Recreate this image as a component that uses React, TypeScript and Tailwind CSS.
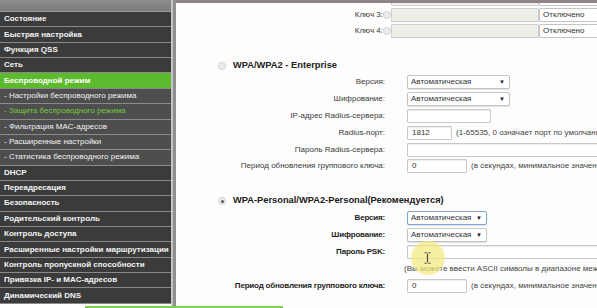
import React from 'react';

const menu: { label: string; kind: 'main' | 'sub' | 'active' | 'subActive' }[] = [
  { label: 'Состояние', kind: 'main' },
  { label: 'Быстрая настройка', kind: 'main' },
  { label: 'Функция QSS', kind: 'main' },
  { label: 'Сеть', kind: 'main' },
  { label: 'Беспроводной режим', kind: 'active' },
  { label: '- Настройки беспроводного режима', kind: 'sub' },
  { label: '- Защита беспроводного режима', kind: 'subActive' },
  { label: '- Фильтрация MAC-адресов', kind: 'sub' },
  { label: '- Расширенные настройки', kind: 'sub' },
  { label: '- Статистика беспроводного режима', kind: 'sub' },
  { label: 'DHCP', kind: 'main' },
  { label: 'Переадресация', kind: 'main' },
  { label: 'Безопасность', kind: 'main' },
  { label: 'Родительский контроль', kind: 'main' },
  { label: 'Контроль доступа', kind: 'main' },
  { label: 'Расширенные настройки маршрутизации', kind: 'main' },
  { label: 'Контроль пропускной способности', kind: 'main' },
  { label: 'Привязка IP- и MAC-адресов', kind: 'main' },
  { label: 'Динамический DNS', kind: 'main' },
];

function Sidebar() {
  return (
    <div className="flex shrink-0">
      <div className="w-[171px] flex flex-col">
        <div className="h-[12px] bg-gradient-to-b from-[#8e8e8e] to-[#7a7a7a] border-b border-[#999]" />
        {menu.map((m) => (
          <div
            key={m.label}
            className={
              'h-[15.37px] flex items-center pl-[4px] border-b-[1.5px] border-[#8a8a8a] text-[8px] font-bold whitespace-nowrap overflow-hidden ' +
              (m.kind === 'active'
                ? 'bg-[#5cbb2c] text-white'
                : m.kind === 'sub'
                  ? 'bg-[#4e4e4e] text-[#f2f2f2] font-normal'
                  : m.kind === 'subActive'
                    ? 'bg-[#4e4e4e] text-[#74c93c] font-normal'
                    : 'bg-[#3b3b3b] text-[#f4f4f4]')
            }
          >
            {m.label}
          </div>
        ))}
      </div>
      <div className="w-[2px] bg-[#c4c4c4]" />
      <div className="w-[3px] bg-[#8f8f8f]" />
    </div>
  );
}

function Select({ w, focus }: { w: string; focus?: boolean }) {
  return (
    <div
      className={
        'h-[14px] flex items-center justify-between pl-[3px] pr-[4px] bg-white rounded-[2px] border text-[8px] text-[#333] shadow-[0_1px_1px_rgba(0,0,0,0.12)] ' +
        w +
        (focus ? ' border-[#7ea6d6]' : ' border-[#c4c4c4]')
      }
    >
      <span>Автоматическая</span>
      <span className="text-[6px] text-[#222]">▼</span>
    </div>
  );
}

function Input({ w, value }: { w: string; value?: string }) {
  return (
    <div
      className={
        'h-[14px] flex items-center pl-[4px] bg-white border border-[#c9c9c9] rounded-[1px] shadow-[inset_0_1px_1px_rgba(0,0,0,0.08)] text-[8px] text-[#333] shrink-0 ' +
        w
      }
    >
      {value}
    </div>
  );
}

function Radio({ checked }: { checked?: boolean }) {
  return (
    <div className="w-[8px] h-[8px] rounded-full border border-[#d2d2d2] bg-[#ececec] flex items-center justify-center shrink-0">
      {checked && <div className="w-[3px] h-[3px] rounded-full bg-[#555]" />}
    </div>
  );
}

function Row({ label, h, bold, children }: { label: string; h: string; bold?: boolean; children: React.ReactNode }) {
  return (
    <div className={'flex items-center ' + h}>
      <div
        className={
          'w-[209px] text-right text-[8px] whitespace-nowrap shrink-0 ' +
          (bold ? 'text-[#1e1e1e] font-bold tracking-[-0.2px]' : 'text-[#3a3a3a]')
        }
      >
        {label}
      </div>
      <div className="w-[22px] shrink-0" />
      <div className="flex items-center gap-[4px] whitespace-nowrap">{children}</div>
    </div>
  );
}

// ключ 2 почти целиком под верхней полосой, текст там не виден
function KeyRow({ label }: { label?: string }) {
  return (
    <div className="flex items-center h-[16px]">
      <div className="w-[207px] text-right text-[8px] text-[#3a3a3a] shrink-0">{label}</div>
      <div className="w-[3px]" />
      <Radio />
      <div className="w-[17px]" />
      <div className="w-[148px] h-[14px] bg-[#eeeee8] border border-[#cfcfcf] rounded-[1px] shrink-0" />
      <div className="w-[5px]" />
      <div className="w-[60px] h-[14px] bg-white border border-[#c4c4c4] rounded-[2px] text-[8px] text-[#333] pl-[3px] flex items-center shrink-0">
        {label ? 'Отключено' : ''}
      </div>
    </div>
  );
}

const hint = 'text-[8px] text-[#444]';

export default function App() {
  return (
    <div
      className="w-[597px] h-[308px] overflow-hidden flex bg-white relative"
      style={{ fontFamily: '"Liberation Sans", Arial, sans-serif' }}
    >
      <Sidebar />
      <div className="flex-1 relative overflow-hidden bg-[#fdfdfd]">
        <div className="absolute top-0 left-0 right-0 h-[3px] bg-[#8c868c] z-10" />
        <div className="flex flex-col -mt-[9px]">
          <KeyRow />
          <KeyRow label="Ключ 3:" />
          <KeyRow label="Ключ 4:" />

          <div className="flex items-center h-[17px] mt-[18px] pl-[42px] gap-[7px]">
            <Radio />
            <span className="text-[9.3px] font-bold text-[#222]">WPA/WPA2 - Enterprise</span>
          </div>
          <Row label="Версия:" h="h-[16.8px]">
            <Select w="w-[103px]" />
          </Row>
          <Row label="Шифрование:" h="h-[16.8px]">
            <Select w="w-[103px]" />
          </Row>
          <Row label="IP-адрес Radius-сервера:" h="h-[16.8px]">
            <Input w="w-[84px]" />
          </Row>
          <Row label="Radius-порт:" h="h-[16.8px]">
            <Input w="w-[45px]" value="1812" />
            <span className={hint}>(1-65535, 0 означает порт по умолчанию 1812)</span>
          </Row>
          <Row label="Пароль Radius-сервера:" h="h-[16.8px]">
            <Input w="w-[200px]" />
          </Row>
          <Row label="Период обновления группового ключа:" h="h-[16.8px]">
            <Input w="w-[60px]" value="0" />
            <span className={hint}>(в секундах, минимальное значение 30, 0 означает отключено)</span>
          </Row>

          <div className="flex items-center h-[17px] mt-[18px] pl-[42px] gap-[7px]">
            <Radio checked />
            <span className="text-[9.3px] font-bold text-[#1a1a1a]">WPA-Personal/WPA2-Personal(Рекомендуется)</span>
          </div>
          <Row label="Версия:" h="h-[17px]" bold>
            <Select w="w-[80px]" focus />
          </Row>
          <Row label="Шифрование:" h="h-[17px]" bold>
            <Select w="w-[80px]" />
          </Row>
          <Row label="Пароль PSK:" h="h-[17px]" bold>
            <Input w="w-[200px]" />
          </Row>
          <div className="h-[17px] flex items-center pl-[228px] whitespace-nowrap">
            <span className={hint}>(Вы можете ввести ASCII символы в диапазоне между 8 и 63 или шестнадцатеричные символы)</span>
          </div>
          <Row label="Период обновления группового ключа:" h="h-[17px]" bold>
            <Input w="w-[60px]" value="0" />
            <span className={hint}>(в секундах, минимальное значение 30, 0 означает отключено)</span>
          </Row>
        </div>

        {/* подсветка курсора */}
        <div className="absolute left-[235px] top-[241px] w-[34px] h-[34px] rounded-full bg-[#f3e97a]/70 flex items-center justify-center">
          <svg width="7" height="12" viewBox="0 0 7 12" className="ml-[-1px]">
            <path d="M0.5 0.75h2.2M4.3 0.75h2.2M3.5 1.5v9M0.5 11.25h2.2M4.3 11.25h2.2" stroke="#4a4a4a" strokeWidth="1.2" fill="none" />
          </svg>
        </div>
      </div>

      {/* полоса загрузки */}
      <div className="absolute left-[85px] bottom-0 w-[198px] h-[2px] bg-[#7fd04e]" />
    </div>
  );
}
